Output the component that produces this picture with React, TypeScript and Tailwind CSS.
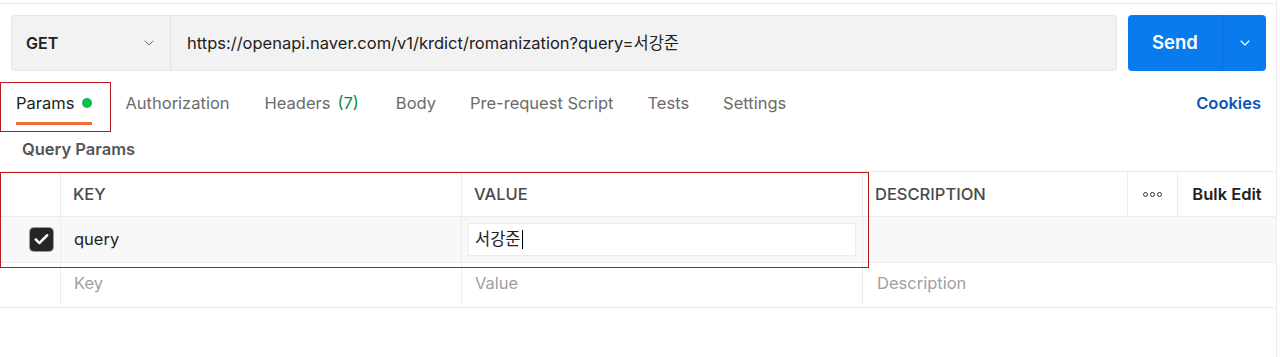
import { ChevronDown, Check } from 'lucide-react'

const font = { fontFamily: 'Inter, "Noto Sans CJK KR", sans-serif' }

export default function App() {
  const tabs = [
    { label: 'Authorization', gap: 'ml-[33px]' },
    { label: 'Headers', gap: 'ml-[35px]' },
    { label: 'Body', gap: 'ml-[37px]' },
    { label: 'Pre-request Script', gap: 'ml-[34px]' },
    { label: 'Tests', gap: 'ml-[34px]' },
    { label: 'Settings', gap: 'ml-[34px]' },
  ]

  return (
    <div className="relative h-[357px] w-[1277px] border-r border-[#ececec] bg-white text-[#212121]" style={font}>
      <div className="h-[3px]" />
      <div className="border-t border-[#ececec]" />

      {/* Request bar */}
      <div className="mt-[11px] flex h-[56px] pl-[11px] pr-[10px]">
        <div className="flex flex-1 overflow-hidden rounded-[4px] border border-[#e4e4e4] bg-[#f2f2f2]">
          <div className="flex w-[159px] items-center justify-between border-r border-[#e2e2e2] pl-[14px] pr-[13px]">
            <span className="text-[16px] font-semibold text-[#212121]">GET</span>
            <ChevronDown size={16} strokeWidth={1.5} className="text-[#6b6b6b]" />
          </div>
          <div className="flex flex-1 items-center pl-[16px] text-[16.5px] text-[#212121]">
            https://openapi.naver.com/v1/krdict/romanization?query=서강준
          </div>
        </div>
        <div className="ml-[11px] flex w-[138px] overflow-hidden rounded-[4px] bg-[#097bed] text-white">
          <div className="flex w-[94px] items-center justify-center text-[18.5px] font-semibold">Send</div>
          <div className="flex flex-1 items-center justify-center border-l border-[#0a6fd4]">
            <ChevronDown size={16} strokeWidth={1.75} />
          </div>
        </div>
      </div>

      {/* Tabs */}
      <div className="mt-[11px] flex h-[42px] items-stretch pl-[16px] pr-[15px] text-[16.5px]">
        <div className="relative flex items-center">
          <span className="text-[#212121]">Params</span>
          <span className="ml-[8px] h-[10px] w-[10px] rounded-full bg-[#0cbb52]" />
          <div className="absolute bottom-[-1px] left-0 right-0 h-[3px] bg-[#f26b3a]" />
        </div>
        {tabs.map((t) => (
          <div key={t.label} className={`flex items-center text-[#6b6b6b] ${t.gap}`}>
            {t.label}
            {t.label === 'Headers' && <span className="ml-[7px] text-[#0a8a3c]">(7)</span>}
          </div>
        ))}
        <div className="ml-auto flex items-center font-semibold text-[#0b56b8]">Cookies</div>
      </div>
      <div className="pointer-events-none absolute left-0 top-[82px] h-[50px] w-[111px] border-[1.5px] border-[#b71c1c]" />

      {/* Query Params */}
      <div className="flex h-[47px] items-center pl-[22px] pt-[3px] text-[16.5px] font-semibold text-[#555555]">Query Params</div>

      <div className="border-b border-[#ececec] text-[16.5px]">
        <div className="flex h-[45px] border-t border-[#ececec]">
          <div className="w-[61px] border-r border-[#ececec]" />
          <div className="flex w-[401px] items-center border-r border-[#ececec] pl-[12px] font-medium text-[#4a4a4a]">KEY</div>
          <div className="flex w-[401px] items-center border-r border-[#ececec] pl-[12px] font-medium text-[#4a4a4a]">VALUE</div>
          <div className="flex w-[265px] items-center border-r border-[#ececec] pl-[12px] font-medium text-[#4a4a4a]">DESCRIPTION</div>
          <div className="flex w-[50px] items-center justify-center border-r border-[#ececec]">
            <span className="flex gap-[2px]">
              <span className="h-[5px] w-[5px] rounded-full border border-[#333]" />
              <span className="h-[5px] w-[5px] rounded-full border border-[#333]" />
              <span className="h-[5px] w-[5px] rounded-full border border-[#333]" />
            </span>
          </div>
          <div className="flex flex-1 items-center justify-center font-semibold text-[#212121]">Bulk Edit</div>
        </div>

        <div className="flex h-[46px] border-t border-[#ececec] bg-[#f8f8f8]">
          <div className="flex w-[61px] items-center justify-end border-r border-[#ececec] pr-[7px]">
            <span className="flex h-[23px] w-[23px] items-center justify-center rounded-[4px] bg-[#262626] shadow-[0_0_0_1px_#9a9a9a]">
              <Check size={17} strokeWidth={3.5} className="text-white" />
            </span>
          </div>
          <div className="flex w-[401px] items-center border-r border-[#ececec] pl-[13px]">query</div>
          <div className="flex w-[401px] items-center border-r border-[#ececec] px-[6px]">
            <div className="flex h-[33px] flex-1 items-center border border-[#ececec] bg-white pl-[6px]">
              서강준<span className="ml-[1px] h-[19px] w-[1px] bg-black" />
            </div>
          </div>
          <div className="flex-1" />
        </div>

        <div className="flex h-[45px] border-t border-[#ececec] pb-[3px] text-[#a0a0a0]">
          <div className="w-[61px] border-r border-[#ececec]" />
          <div className="flex w-[401px] items-center border-r border-[#ececec] pl-[13px]">Key</div>
          <div className="flex w-[401px] items-center border-r border-[#ececec] pl-[13px]">Value</div>
          <div className="flex flex-1 items-center pl-[14px]">Description</div>
        </div>
      </div>
      <div className="pointer-events-none absolute left-0 top-[172px] h-[96px] w-[869px] border-[1.5px] border-[#b71c1c]" />
    </div>
  )
}
